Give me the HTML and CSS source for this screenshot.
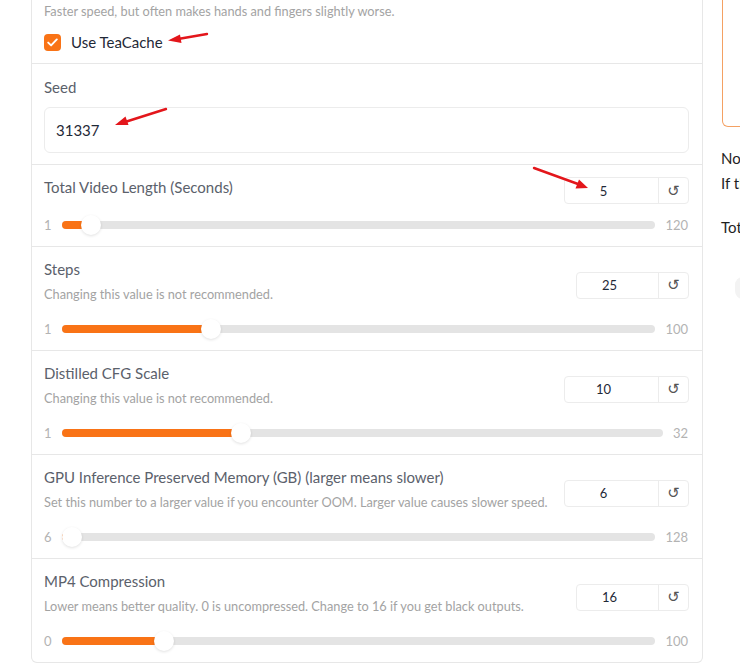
FILE: index.html
```html
<!DOCTYPE html>
<html>
<head>
<meta charset="utf-8">
<link rel="stylesheet" href="styles.css">
</head>
<body>
<div class="page">
  <div class="left">
    <div class="panel">
      <section class="block block--top">
        <p class="info">Faster speed, but often makes hands and fingers slightly worse.</p>
        <label class="check">
          <span class="check-box"><svg width="11" height="9" viewBox="0 0 11 9"><path d="M1.2 4.6 L4.1 7.4 L9.8 1.4" fill="none" stroke="#fff" stroke-width="1.9" stroke-linecap="round" stroke-linejoin="round"/></svg></span>
          <span class="check-label">Use TeaCache</span>
        </label>
      </section>
      <section class="block block--seed">
        <div class="label">Seed</div>
        <div class="text-input">31337</div>
      </section>
      <section class="block block--slider block--compact">
        <div class="head">
          <div class="titles"><div class="label">Total Video Length (Seconds)</div></div>
          <div class="num num--wide"><span class="num-value">5</span><span class="reset">↺</span></div>
        </div>
        <div class="slider">
          <span class="lim lim--min">1</span>
          <div class="track" style="--p:0.0336"><div class="fill"></div><div class="thumb"></div></div>
          <span class="lim">120</span>
        </div>
      </section>
      <section class="block block--slider">
        <div class="head">
          <div class="titles"><div class="label">Steps</div><div class="info">Changing this value is not recommended.</div></div>
          <div class="num"><span class="num-value">25</span><span class="reset">↺</span></div>
        </div>
        <div class="slider">
          <span class="lim lim--min">1</span>
          <div class="track" style="--p:0.2424"><div class="fill"></div><div class="thumb"></div></div>
          <span class="lim">100</span>
        </div>
      </section>
      <section class="block block--slider">
        <div class="head">
          <div class="titles"><div class="label">Distilled CFG Scale</div><div class="info">Changing this value is not recommended.</div></div>
          <div class="num num--wide"><span class="num-value">10</span><span class="reset">↺</span></div>
        </div>
        <div class="slider">
          <span class="lim lim--min">1</span>
          <div class="track" style="--p:0.2903"><div class="fill"></div><div class="thumb"></div></div>
          <span class="lim">32</span>
        </div>
      </section>
      <section class="block block--slider">
        <div class="head">
          <div class="titles"><div class="label">GPU Inference Preserved Memory (GB) (larger means slower)</div><div class="info">Set this number to a larger value if you encounter OOM. Larger value causes slower speed.</div></div>
          <div class="num num--wide"><span class="num-value">6</span><span class="reset">↺</span></div>
        </div>
        <div class="slider">
          <span class="lim lim--min">6</span>
          <div class="track" style="--p:0"><div class="fill"></div><div class="thumb"></div></div>
          <span class="lim">128</span>
        </div>
      </section>
      <section class="block block--slider">
        <div class="head">
          <div class="titles"><div class="label">MP4 Compression</div><div class="info">Lower means better quality. 0 is uncompressed. Change to 16 if you get black outputs.</div></div>
          <div class="num"><span class="num-value">16</span><span class="reset">↺</span></div>
        </div>
        <div class="slider">
          <span class="lim lim--min">0</span>
          <div class="track" style="--p:0.16"><div class="fill"></div><div class="thumb"></div></div>
          <span class="lim">100</span>
        </div>
      </section>
    </div>
  </div>
  <div class="right">
    <div class="video-box"></div>
    <p class="note">Note that the ending actions will be generated before the starting actions due to the inverted sampling.</p>
    <p class="note">If the starting action is not in the video, you just need to wait, and it will appear later.</p>
    <p class="note note--gap">Total generated frames: 0, Video length: 0.00 seconds (FPS-30)</p>
    <div class="ghost-btn">Start</div>
  </div>
  <svg class="annotations" width="740" height="664" viewBox="0 0 740 664">
    <g stroke="#e3161b" stroke-width="2.4" stroke-linecap="round" fill="#e3161b">
      <line x1="207" y1="34" x2="178" y2="39"/>
      <polygon points="168,40.5 180,34.5 181.5,43" stroke="none"/>
      <line x1="166" y1="109" x2="125" y2="122"/>
      <polygon points="115,125 125.5,116.5 128.5,125" stroke="none"/>
      <line x1="534" y1="168" x2="578" y2="184"/>
      <polygon points="588,188 575.5,188.5 579,179.5" stroke="none"/>
    </g>
  </svg>
</div>
</body>
</html>
```

FILE: styles.css
```css
html, body {
  margin: 0;
  padding: 0;
  overflow: hidden;
  background: #fff;
}
body {
  font-family: Lato, "Liberation Sans", sans-serif;
  color: #1f2937;
}
.page {
  position: relative;
  width: 740px;
  height: 664px;
  display: flex;
  gap: 18px;
  padding-left: 31px;
  box-sizing: border-box;
  overflow: hidden;
}
.left {
  flex: 0 0 672px;
  min-width: 0;
}
.panel {
  display: flex;
  flex-direction: column;
  gap: 1px;
  background: #e7e7e7;
  border: 1px solid #e7e7e7;
  border-top: none;
  border-radius: 0 0 6px 6px;
  overflow: hidden;
}
.block {
  background: #fff;
  padding: 12px 13px 11px 12px;
  min-width: 0;
}
.block--top {
  padding-top: 2px;
  padding-bottom: 11px;
}
.block--seed {
  padding-top: 13px;
}
.info {
  margin: 0;
  font-size: 12.75px;
  line-height: 18px;
  color: #a3a3a3;
  white-space: nowrap;
}
.check {
  display: flex;
  align-items: center;
  gap: 10px;
  height: 20px;
  margin-top: 12px;
}
.check-box {
  width: 17px;
  height: 17px;
  border-radius: 4px;
  background: #f97316;
  display: flex;
  align-items: center;
  justify-content: center;
}
.check-label {
  font-size: 15px;
  color: #1f2937;
}
.label {
  font-size: 15px;
  line-height: 20px;
  color: #5b616b;
  white-space: nowrap;
}
.text-input {
  margin-top: 10px;
  height: 46px;
  box-sizing: border-box;
  border: 1px solid #ececec;
  border-radius: 6px;
  padding: 0 11px;
  display: flex;
  align-items: center;
  font-size: 15px;
  color: #1f2937;
}
.block--compact {
  padding-top: 4px;
}
.head {
  display: flex;
  align-items: center;
  justify-content: space-between;
  gap: 12px;
}
.titles {
  flex: 1;
  min-width: 0;
}
.titles .info {
  margin-top: 6px;
}
.num {
  flex: 0 0 113px;
  height: 27px;
  margin-top: 8px;
  box-sizing: border-box;
  border: 1px solid #ececec;
  border-radius: 4px;
  display: flex;
  font-size: 13px;
  color: #1f2937;
}
.num--wide {
  flex-basis: 125px;
}
.num-value {
  flex: 1;
  display: flex;
  align-items: center;
  justify-content: center;
  padding: 0 24px 0 8px;
}
.reset {
  flex: 0 0 29px;
  border-left: 1px solid #ececec;
  display: flex;
  align-items: center;
  justify-content: center;
  font-family: "DejaVu Sans", sans-serif;
  font-size: 15px;
  color: #555;
}
.slider {
  display: flex;
  align-items: center;
  gap: 10px;
  height: 20px;
  margin-top: 16px;
}
.block--compact .slider {
  margin-top: 11px;
}
.lim {
  font-size: 13px;
  color: #b3b3b3;
  padding-right: 1px;
}
.lim--min {
  width: 8px;
  padding-right: 0;
}
.track {
  position: relative;
  flex: 1;
  height: 8px;
  border-radius: 4px;
  background: #e4e4e4;
}
.fill {
  position: absolute;
  left: 0;
  top: 0;
  bottom: 0;
  width: calc(var(--p) * (100% - 20px) + 10px);
  background: #f97316;
  border-radius: 4px;
}
.thumb {
  position: absolute;
  top: -6px;
  left: calc(var(--p) * (100% - 20px));
  width: 20px;
  height: 20px;
  border-radius: 50%;
  background: #fff;
  box-shadow: 0 1px 3px rgba(0, 0, 0, 0.12);
}
.right {
  flex: 0 0 300px;
  white-space: nowrap;
}
.video-box {
  margin-left: 1px;
  height: 126px;
  border: 1.5px solid #f4a163;
  border-top: none;
  border-radius: 0 0 0 6px;
}
.note {
  margin: 0;
  font-size: 15px;
  line-height: 25px;
  color: #1f1f1f;
}
.video-box + .note {
  margin-top: 19px;
}
.note--gap {
  margin-top: 19px;
}
.ghost-btn {
  margin: 37px 0 0 14px;
  width: 200px;
  height: 22px;
  border-radius: 8px;
  background: #f3f3f3;
  color: #f3f3f3;
  font-size: 12px;
}
.annotations {
  position: absolute;
  left: 0;
  top: 0;
  pointer-events: none;
}
```
